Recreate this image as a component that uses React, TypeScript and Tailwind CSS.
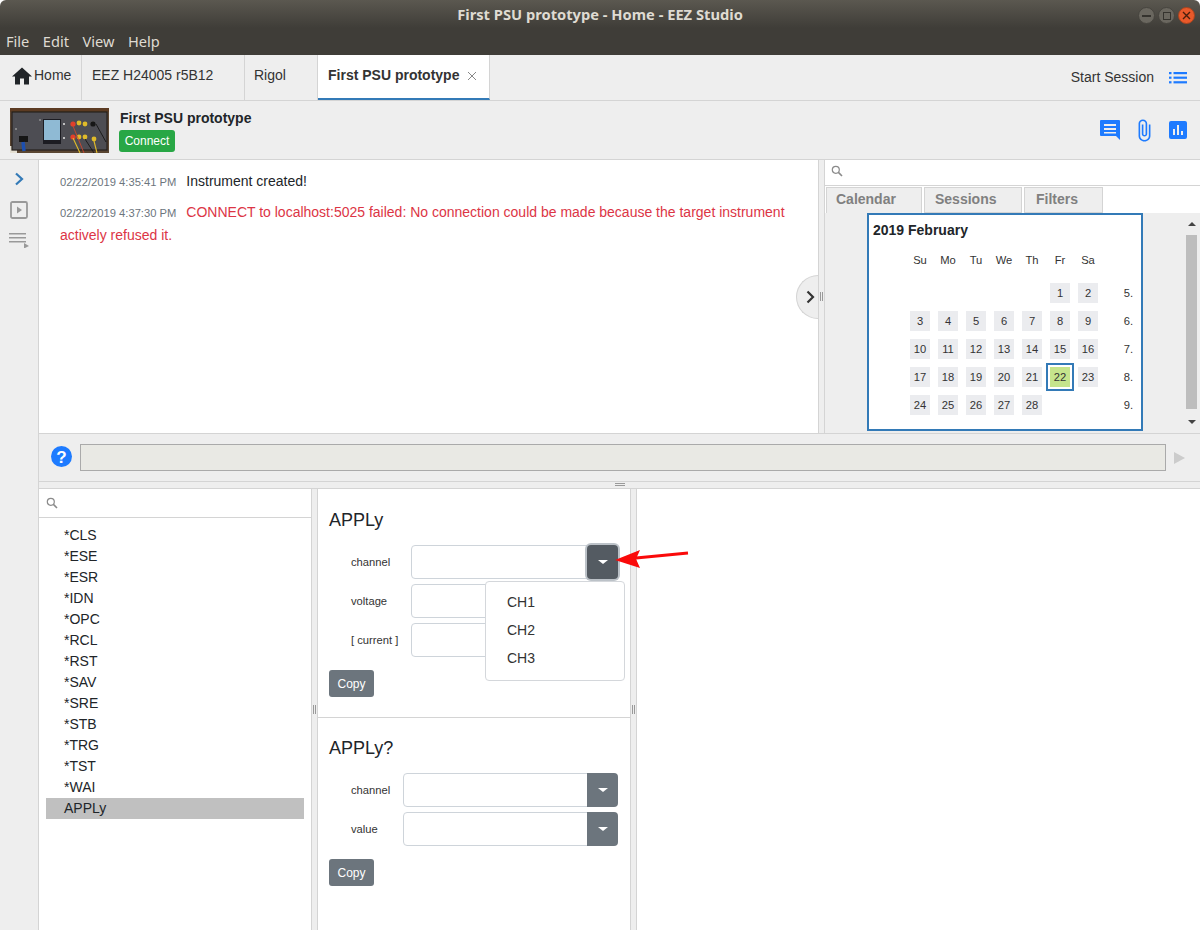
import React from "react";

const days = [
  [null, null, null, null, null, 1, 2, "5."],
  [3, 4, 5, 6, 7, 8, 9, "6."],
  [10, 11, 12, 13, 14, 15, 16, "7."],
  [17, 18, 19, 20, 21, 22, 23, "8."],
  [24, 25, 26, 27, 28, null, null, "9."],
];
const commands = ["*CLS", "*ESE", "*ESR", "*IDN", "*OPC", "*RCL", "*RST", "*SAV", "*SRE", "*STB", "*TRG", "*TST", "*WAI"];

const SearchIcon = () => (
  <svg width="12" height="12" viewBox="0 0 12 12" fill="none" stroke="#8a8a8a" strokeWidth="1.2">
    <circle cx="4.8" cy="4.8" r="3.5" />
    <path d="M7.4 7.4 11 11" strokeWidth="1.6" />
  </svg>
);

const Caret = () => <div className="w-0 h-0 border-x-[5px] border-x-transparent border-t-[4px] border-t-white" />;

const Grip = () => (
  <div className="flex gap-px">
    <div className="w-px h-[9px] bg-[#999]" />
    <div className="w-px h-[9px] bg-[#999]" />
  </div>
);

const VSplit = () => (
  <div className="w-[7px] shrink-0 bg-[#eee] border-x border-[#d4d4d4] flex flex-col items-center justify-center">
    <Grip />
  </div>
);

const Field: React.FC<{ label: string; labelWidth: string; focused?: boolean }> = ({ label, labelWidth, focused }) => (
  <div className="flex items-center h-[34px]">
    <div className={`text-[11.2px] text-[#333] pl-[22px] shrink-0 ${labelWidth}`}>{label}</div>
    <div className="flex-1 flex h-[34px]">
      <div className="flex-1 border border-[#ced4da] rounded-l-[4px] bg-white" />
      <div
        className={`w-[31px] rounded-r-[4px] -ml-px flex items-center justify-center ${
          focused ? "bg-[#545b62] rounded-[4px] ring-[2px] ring-[#bcc2c8]" : "bg-[#6c757d]"
        }`}
      >
        <Caret />
      </div>
    </div>
  </div>
);

const CopyButton = () => (
  <button className="w-[45px] h-[27px] bg-[#6c757d] text-white text-[12px] rounded-[3px] block">Copy</button>
);

const PanelPhoto = () => (
  <svg width="99" height="45" viewBox="0 0 99 45" className="shrink-0">
    <defs>
      <filter id="soft">
        <feGaussianBlur stdDeviation="0.5" />
      </filter>
    </defs>
    <rect width="99" height="45" fill="#5a4632" />
    <g filter="url(#soft)">
      <rect x="0" y="0" width="99" height="4" fill="#5c3a24" />
      <rect x="0" y="38" width="7" height="7" fill="#e4dfd2" />
      <rect x="2" y="4" width="95" height="38" fill="#4e4e52" stroke="#231f1c" strokeWidth="1.2" />
      <rect x="33" y="11" width="18" height="25" fill="#1e1e20" />
      <rect x="34" y="12" width="16" height="20" fill="#8fbad4" />
      <circle cx="63" cy="16" r="2.6" fill="#e2402c" />
      <circle cx="63" cy="29" r="2.6" fill="#e2402c" />
      <circle cx="69" cy="15" r="2.4" fill="#e0bb2a" />
      <circle cx="75" cy="16" r="2.4" fill="#e0bb2a" />
      <circle cx="83" cy="16" r="2.600" fill="#161616" />
      <circle cx="69" cy="29" r="2.4" fill="#e0bb2a" />
      <circle cx="75" cy="29" r="2.4" fill="#e0bb2a" />
      <circle cx="84" cy="31" r="2.4" fill="#e0bb2a" />
      <path d="M63 18 74 45" stroke="#d0442e" strokeWidth="0.9" fill="none" />
      <path d="M63 30 70 45M84 33 87 45" stroke="#e0bb2a" strokeWidth="1.1" fill="none" />
      <path d="M86 16 96 34M75 31 84 45" stroke="#141414" strokeWidth="0.9" fill="none" />
      <rect x="9" y="28" width="9" height="6" fill="#141414" />
      <path d="M13 34 14 43" stroke="#1f50b0" strokeWidth="3.4" fill="none" />
      <circle cx="54" cy="16" r="1" fill="#e6e6e6" />
      <circle cx="54" cy="30" r="1" fill="#e6e6e6" />
      <circle cx="30" cy="12" r="0.8" fill="#bbb" />
      <circle cx="6" cy="21" r="1" fill="#999" />
    </g>
  </svg>
);

export default function App() {
  return (
    <div className="w-[1200px] h-[930px] overflow-hidden flex flex-col bg-white text-[#212529] font-['Liberation_Sans',Arial,sans-serif]">
      {/* window chrome */}
      <div className="h-[28px] shrink-0 rounded-t-[6px] bg-gradient-to-b from-[#5b5850] to-[#3f3d38] flex items-center relative font-['Noto_Sans',sans-serif]">
        <div className="flex-1 text-center text-[14.7px] font-bold text-[#dfdbd2]">First PSU prototype - Home - EEZ Studio</div>
        <div className="absolute right-[5px] top-[7px] flex gap-[3px]">
          <div className="w-[17px] h-[17px] rounded-full bg-[#6a675f] border border-[#46443e] flex items-center justify-center">
            <div className="w-[9px] h-[2px] bg-[#35332e]" />
          </div>
          <div className="w-[17px] h-[17px] rounded-full bg-[#6a675f] border border-[#46443e] flex items-center justify-center">
            <div className="w-[8px] h-[8px] border border-[#35332e]" />
          </div>
          <div className="w-[17px] h-[17px] rounded-full bg-[#e9592a] border border-[#a8441f] flex items-center justify-center">
            <svg width="9" height="9" viewBox="0 0 9 9" stroke="#4a1f0d" strokeWidth="1.4">
              <path d="M1 1 8 8M8 1 1 8" />
            </svg>
          </div>
        </div>
      </div>
      <div className="h-[27px] shrink-0 bg-[#3f3d38] flex items-center pl-[6px] pt-px gap-[13.5px] text-[14.6px] text-[#dfdbd2] font-['Noto_Sans',sans-serif]">
        <span>File</span>
        <span>Edit</span>
        <span>View</span>
        <span>Help</span>
      </div>

      {/* tabs */}
      <div className="h-[46px] shrink-0 bg-[#eee] border-b border-[#d4d4d4] flex text-[14px] text-[#333]">
        <div className="w-[82px] border-r border-[#d4d4d4] flex items-center pl-[12px] pb-[4px]">
          <svg width="20" height="18" viewBox="2 3 20 17" fill="#212529" className="mr-[2px]">
            <path d="M10 20v-6h4v6h5v-8h3L12 3 2 12h3v8z" />
          </svg>
          Home
        </div>
        <div className="w-[163px] border-r border-[#d4d4d4] flex items-center pl-[10px] pb-[4px]">EEZ H24005 r5B12</div>
        <div className="w-[73px] border-r border-[#d4d4d4] flex items-center pl-[9px] pb-[4px]">Rigol</div>
        <div className="w-[172px] h-[45px] bg-white border-r border-[#d4d4d4] border-b-2 border-b-[#337ab7] flex items-center pl-[10px] pb-[2px] font-bold">
          First PSU prototype
          <svg width="10" height="10" viewBox="0 0 10 10" stroke="#888" strokeWidth="1" className="ml-[8px]">
            <path d="M1 1 9 9M9 1 1 9" />
          </svg>
        </div>
        <div className="flex-1 flex items-center justify-end pr-[13px] pb-[1px]">
          <span>Start Session</span>
          <svg width="18" height="12" viewBox="0 0 18 12" fill="#1e7bff" className="ml-[15px] mt-[2px]">
            <rect x="0" y="0" width="2.5" height="2.2" />
            <rect x="4.5" y="0" width="13.5" height="2.2" />
            <rect x="0" y="4.6" width="2.5" height="2.2" />
            <rect x="4.5" y="4.6" width="13.5" height="2.2" />
            <rect x="0" y="9.2" width="2.5" height="2.2" />
            <rect x="4.5" y="9.2" width="13.5" height="2.2" />
          </svg>
        </div>
      </div>

      {/* instrument header */}
      <div className="h-[59px] shrink-0 bg-[#eee] border-b border-[#d4d4d4] flex items-center pl-[10px] pr-[13px]">
        <PanelPhoto />
        <div className="ml-[10px] flex flex-col items-start">
          <div className="text-[14px] font-bold leading-[17px] mt-[2px] ml-px">First PSU prototype</div>
          <div className="mt-[3px] h-[22px] w-[56px] rounded-[3px] bg-[#28a745] text-white text-[12px] flex items-center justify-center">Connect</div>
        </div>
        <div className="ml-auto flex items-center gap-[18px]">
          <svg width="20" height="20" viewBox="0 0 20 20" fill="#1e7bff">
            <path d="M1 0h18a1 1 0 0 1 1 1v15l0 4-4-4H1a1 1 0 0 1-1-1V1a1 1 0 0 1 1-1z" />
            <path d="M4 4h12v2H4zM4 8h12v2H4zM4 12h12v1.600H4z" fill="#eee" />
          </svg>
          <svg width="13" height="23" viewBox="6.500 0.500 12 23" preserveAspectRatio="none" fill="#1e7bff">
            <path d="M16.500 6v11.500c0 2.210-1.790 4-4 4s-4-1.790-4-4V5c0-1.380 1.120-2.500 2.500-2.500s2.500 1.120 2.500 2.500v10.500c0 .55-.45 1-1 1s-1-.45-1-1V6H10v9.500c0 1.380 1.120 2.500 2.500 2.500s2.500-1.120 2.500-2.500V5c0-2.210-1.790-4-4-4S7 2.790 7 5v12.500c0 3.040 2.460 5.500 5.500 5.500s5.500-2.460 5.500-5.500V6h-1.500z" />
          </svg>
          <svg width="18" height="18" viewBox="0 0 18 18">
            <rect width="18" height="18" rx="2" fill="#1e7bff" />
            <path d="M4 8h2v6H4zM8 4h2v10H8zM12 10h2v4h-2z" fill="#eee" />
          </svg>
        </div>
      </div>

      <div className="flex-1 min-h-0 flex">
        {/* left rail */}
        <div className="w-[39px] shrink-0 bg-[#eee] border-r border-[#d4d4d4] flex flex-col items-center pt-[12px]">
          <svg width="10" height="14" viewBox="0 0 10 14" fill="none" stroke="#337ab7" strokeWidth="2.2">
            <path d="M2 1.500 8 7 2 12.500" />
          </svg>
          <svg width="18" height="18" viewBox="0 0 18 18" className="mt-[15px]">
            <rect x="1" y="1" width="16" height="16" rx="1.5" fill="none" stroke="#999" strokeWidth="1.8" />
            <path d="M7 5.500 12 9l-5 3.500z" fill="#999" />
          </svg>
          <svg width="20" height="15" viewBox="0 0 20 15" fill="#999" className="mt-[14px]">
            <path d="M0 0h17v1.500H0zM0 4h17v1.500H0zM0 8h17v1.500H0zM15 10l5 3-5 2.500z" />
          </svg>
        </div>

        <div className="flex-1 min-w-0 flex flex-col">
          {/* history + calendar */}
          <div className="h-[274px] shrink-0 flex border-b border-[#d4d4d4]">
            <div className="flex-1 min-w-0 relative pl-[21px] pr-[30px] pt-[11px]">
              <div className="text-[14px] leading-[21px]">
                <span className="text-[11.2px] text-[#6c757d] mr-[10px]">02/22/2019 4:35:41 PM</span>
                Instrument created!
              </div>
              <div className="text-[14px] leading-[21.6px] text-[#dc3545] mt-[9px]">
                <span className="text-[11.2px] text-[#6c757d] mr-[10px]">02/22/2019 4:37:30 PM</span>
                CONNECT to localhost:5025 failed: No connection could be made because the target instrument actively refused it.
              </div>
              <div className="absolute right-0 top-[115px] w-[22px] h-[44px] rounded-l-[22px] bg-[#eee] border border-r-0 border-[#d4d4d4] flex items-center justify-center pl-[5px]">
                <svg width="9" height="14" viewBox="0 0 9 14" fill="none" stroke="#333" strokeWidth="2.2">
                  <path d="M1.500 1.500 7 7 1.500 12.500" />
                </svg>
              </div>
            </div>
            <VSplit />
            <div className="w-[375px] shrink-0 flex flex-col min-h-0">
              <div className="h-[26px] shrink-0 border-b border-[#d4d4d4] flex items-center pl-[6px] pb-[3px]">
                <SearchIcon />
              </div>
              <div className="h-[27px] shrink-0 flex pt-px gap-[2px] pl-px text-[14px] font-bold text-[#808080]">
                <div className="w-[96px] bg-[#eee] border-x border-t border-[#d4d4d4] pl-[9px] leading-[23px]">Calendar</div>
                <div className="w-[98px] bg-[#eee] border border-[#d4d4d4] pl-[10px] leading-[23px]">Sessions</div>
                <div className="w-[79px] bg-[#eee] border border-[#d4d4d4] pl-[11px] leading-[23px]">Filters</div>
              </div>
              <div className="flex-1 min-h-0 bg-[#eee] flex pl-[42px]">
                <div className="w-[276px] h-[218px] border-2 border-[#337ab7] bg-white pl-[4px] shrink-0">
                  <div className="h-[30px] text-[14px] font-bold flex items-center">2019 February</div>
                  <div className="pl-[33px] pr-[8px] grid grid-cols-[repeat(7,28px)_1fr] text-[11.2px] text-[#333] h-[28px] items-center text-center mt-px">
                    <span>Su</span>
                    <span>Mo</span>
                    <span>Tu</span>
                    <span>We</span>
                    <span>Th</span>
                    <span>Fr</span>
                    <span>Sa</span>
                  </div>
                  <div className="pl-[33px] pr-[8px] mt-[5px] grid grid-cols-[repeat(7,28px)_1fr] auto-rows-[28px] items-center justify-items-center text-[11.2px] text-[#333]">
                    {days.flat().map((d, i) =>
                      typeof d === "string" ? (
                        <span key={i} className="justify-self-end">
                          {d}
                        </span>
                      ) : d === null ? (
                        <span key={i} />
                      ) : d === 22 ? (
                        <div key={i} className="w-[28px] h-[28px] border-2 border-[#337ab7] p-[2px]">
                          <div className="w-full h-full bg-[#c5e48c] flex items-center justify-center">22</div>
                        </div>
                      ) : (
                        <div key={i} className="w-[20px] h-[20px] bg-[#ebecef] flex items-center justify-center">
                          {d}
                        </div>
                      )
                    )}
                  </div>
                </div>
                <div className="ml-auto w-[14px] shrink-0 flex flex-col items-start">
                  <div className="h-[22px] w-[11px] flex items-center justify-center">
                    <div className="w-0 h-0 border-x-[4px] border-x-transparent border-b-[4px] border-b-[#444]" />
                  </div>
                  <div className="w-[11px] h-[174px] bg-[#bdbdbd]" />
                  <div className="h-[23px] w-[11px] flex items-center justify-center mt-px">
                    <div className="w-0 h-0 border-x-[4px] border-x-transparent border-t-[4px] border-t-[#444]" />
                  </div>
                </div>
              </div>
            </div>
          </div>

          {/* command line */}
          <div className="h-[48px] shrink-0 bg-[#eee] border-b border-[#d4d4d4] flex items-center pl-[12px]">
            <svg width="21" height="21" viewBox="0 0 21 21" className="shrink-0 mb-[2px]">
              <circle cx="10.500" cy="10.500" r="10.500" fill="#1e7bff" />
              <text x="10.500" y="16.500" textAnchor="middle" fontSize="17" fontWeight="700" fill="#fff" fontFamily="Liberation Sans">
                ?
              </text>
            </svg>
            <div className="ml-[8px] w-[1086px] h-[27px] border border-[#aaa] bg-[#e9e9e4]" />
            <div className="ml-[8px] w-0 h-0 border-y-[6px] border-y-transparent border-l-[11px] border-l-[#ccc]" />
          </div>
          <div className="h-[7px] shrink-0 bg-[#eee] border-b border-[#d4d4d4] flex flex-col items-center justify-center gap-px pb-px">
            <div className="w-[10px] h-px bg-[#999]" />
            <div className="w-[10px] h-px bg-[#999]" />
          </div>

          {/* commands */}
          <div className="flex-1 min-h-0 flex">
            <div className="w-[272px] shrink-0 flex flex-col">
              <div className="h-[29px] shrink-0 border-b border-[#d4d4d4] flex items-center pl-[7px]">
                <SearchIcon />
              </div>
              <div className="pt-[7px] pl-[7px] pr-[7px] text-[14px] leading-[21px]">
                {commands.map((c) => (
                  <div key={c} className="pl-[18px]">
                    {c}
                  </div>
                ))}
                <div className="pl-[18px] bg-[#c0c0c0]">APPLy</div>
              </div>
            </div>
            <VSplit />
            <div className="w-[312px] shrink-0 relative">
              <div className="h-[229px] border-b border-[#d4d4d4] pl-[11px] pr-[12px] pt-[20px]">
                <div className="text-[18px] leading-[22px]">APPLy</div>
                <div className="mt-[14px] flex flex-col gap-[5px]">
                  <Field label="channel" labelWidth="w-[82px]" focused />
                  <Field label="voltage" labelWidth="w-[82px]" />
                  <Field label="[ current ]" labelWidth="w-[82px]" />
                </div>
                <div className="mt-[13px]">
                  <CopyButton />
                </div>
              </div>
              <div className="pl-[11px] pr-[12px] pt-[19px]">
                <div className="text-[18px] leading-[22px]">APPLy?</div>
                <div className="mt-[14px] flex flex-col gap-[5px]">
                  <Field label="channel" labelWidth="w-[74px]" />
                  <Field label="value" labelWidth="w-[74px]" />
                </div>
                <div className="mt-[13px]">
                  <CopyButton />
                </div>
              </div>

              {/* open dropdown */}
              <div className="absolute left-[167px] top-[92px] w-[140px] h-[100px] bg-white border border-[#d4d7db] rounded-[4px] pt-[7px] text-[14px] text-[#333]">
                <div className="h-[28px] leading-[27px] pl-[21px]">CH1</div>
                <div className="h-[28px] leading-[27px] pl-[21px]">CH2</div>
                <div className="h-[28px] leading-[27px] pl-[21px]">CH3</div>
              </div>
              {/* annotation arrow */}
              <svg width="80" height="24" viewBox="0 0 80 24" className="absolute left-[297px] top-[57px] overflow-visible">
                <path d="M73 7 21 12" stroke="#fa0a0a" strokeWidth="3" fill="none" />
                <path d="M0 14 25 4 21 13 25 22z" fill="#fa0a0a" />
              </svg>
            </div>
            <VSplit />
            <div className="flex-1" />
          </div>
        </div>
      </div>
    </div>
  );
}
